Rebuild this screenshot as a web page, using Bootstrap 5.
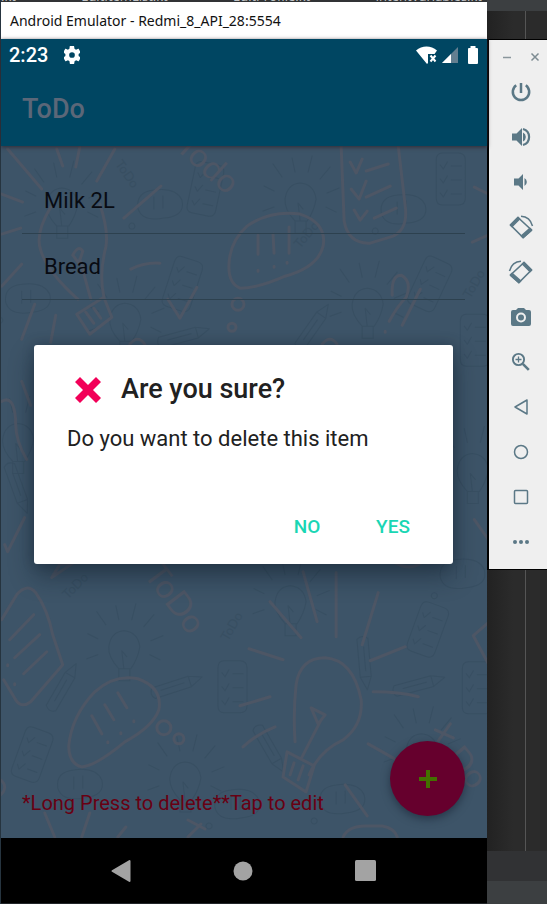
<!DOCTYPE html>
<html lang="en">
<head>
<meta charset="utf-8">
<meta name="viewport" content="width=device-width, initial-scale=1">
<title>Android Emulator</title>
<link href="https://cdn.jsdelivr.net/npm/bootstrap@5.3.0/dist/css/bootstrap.min.css" rel="stylesheet">
<style>
body { background: #2b2b2b; font-family: Roboto, "Liberation Sans", sans-serif; }
button { background: none; border: 0; padding: 0; }
svg { display: block; }
.emulator { border-left: 1px solid #26343f; min-width: 0; }
.editor-tabs { height: 2px; background: #313335; color: #c4c6c8; font: 13px/12px "Open Sans", sans-serif; padding-right: 5px; }
.window-title { background: #fff; color: #111; font: 14px/37px "Noto Sans", "Open Sans", sans-serif; padding-left: 9px; }
.status { height: 32px; color: #fff; font-size: 20px; line-height: 32px; font-weight: 500; padding: 0 7px 0 8px; }
.top-area { background: #004662; box-shadow: 0 1px 4px rgba(50, 35, 45, .9); z-index: 1; }
.app-name { color: #5b6778; font-size: 27px; line-height: 73px; font-weight: 500; padding: 2px 0 0 21px; }
.board { background: #3d5468; padding: 22px 22px 22px 21px; }
.doodles { z-index: 0; inset: 0; width: 100%; height: 100%; }
.todo-list { --bs-list-group-bg: transparent; --bs-list-group-color: #080b12; z-index: 1; }
.board .todo-list .list-group-item { font-size: 22px; line-height: 65px; padding: 0 22px; border-width: 0 0 1px; border-color: #2d414f; }
.hint { color: #680013; font-size: 20px; line-height: 26px; }
.bottom-row { z-index: 1; }
.fab { width: 75px; height: 75px; background: #66002d; box-shadow: 0 3px 8px rgba(20, 30, 45, .55); }
.dialog-layer { inset: 32px 34px 0 33px; z-index: 2; }
.dialog-box { background: #fff; color: #212121; border-radius: 3px; box-shadow: 0 12px 24px rgba(12, 25, 38, .45), 0 0 12px rgba(12, 25, 38, .25); padding: 24px 17px 14px 33px; }
.dialog-title { font-size: 27px; line-height: 40px; font-weight: 500; gap: 17px; padding-left: 5px; }
.dialog-text { font-size: 22px; line-height: 30px; margin: 15px 0 50px; }
.dialog-actions button { color: #1ad6b4; font-size: 19px; line-height: 46px; font-weight: 500; width: 86px; }
.nav-keys { height: 65px; background: #000; padding: 0 82px 0 80px; }
.nav-keys button { width: 80px; }
.side { width: 60px; background: linear-gradient(90deg, #222 0, #2b2b2b 26px); }
.side-top { height: 39px; }
.side-cap { height: 11px; background: #3c3f41; }
.margin-rule { border-left: 1px solid #555; margin-left: 38px; }
.tools { background: #efefef; border: 1px solid #000; border-right: 0; border-left-width: 2px; color: #5b7886; padding-bottom: 5px; }
.tools .tool { height: 45px; width: 63px; color: inherit; }
.win-keys { height: 29px; padding: 5px 0 0 13px; gap: 18px; color: #8a969c; }
.pane-a { height: 30px; background: #313234; }
.pane-b { height: 23px; background: #3c3f41; }
</style>
</head>
<body>
<div class="d-flex min-vh-100 overflow-hidden">
  <main class="emulator flex-grow-1 d-flex flex-column">
    <div class="editor-tabs d-flex align-items-end justify-content-between overflow-hidden" aria-hidden="true"><span>.kt</span><span>EditItemList.kt</span><span>EditProfile.kt</span><span>IntentVariables.kt</span></div>
    <div class="window-title text-nowrap">Android Emulator - Redmi_8_API_28:5554</div>

    <div class="position-relative flex-grow-1 d-flex flex-column">
      <header class="top-area position-relative">
        <div class="status d-flex align-items-center">
          <span>2:23</span>
          <svg class="ms-3" width="16" height="18" viewBox="3 2 18 20" fill="#fff"><path d="M19.4 13a7.500 7.500 0 0 0 0-2l2.100-1.600c.2-.2.3-.4.1-.7l-2-3.400c-.1-.3-.4-.3-.6-.2l-2.500 1a7 7 0 0 0-1.700-1L14.400 2.500c0-.3-.2-.5-.5-.5h-4c-.2 0-.4.2-.5.500L9.100 5.100a7 7 0 0 0-1.700 1l-2.500-1c-.2-.1-.5 0-.6.2l-2 3.400c-.1.200-.1.500.1.700L4.600 11a7.500 7.500 0 0 0 0 2l-2.100 1.600c-.2.200-.3.400-.1.700l2 3.400c.1.200.4.300.6.200l2.500-1a7 7 0 0 0 1.700 1l.3 2.600c.1.300.3.500.5.500h4c.3 0 .5-.2.500-.5l.4-2.600a7 7 0 0 0 1.700-1l2.500 1c.2.100.5 0 .6-.2l2-3.400c.1-.2.100-.5-.1-.7zM12 15.200a3.200 3.200 0 1 1 0-6.400 3.200 3.200 0 0 1 0 6.400z"/></svg>
          <svg class="ms-auto" width="22" height="18" viewBox="0 0 22 18"><path fill="#fff" d="M0 4.500C6-.8 15-.8 21 4.500L18.500 8H12v9l-1 1z"/><path d="M14.500 9.500l5 6m0-6l-5 6" stroke="#fff" stroke-width="2"/></svg>
          <svg class="ms-1" width="16" height="16" viewBox="0 0 16 16"><path d="M16 0v16H0z" fill="#647f90"/><path d="M9 7v9H0z" fill="#fff"/></svg>
          <svg class="ms-2" width="14" height="18" viewBox="0 0 14 18"><path fill="#fff" d="M4.500 0h5v2H11q1 0 1 1v14q0 1-1 1H3q-1 0-1-1V3q0-1 1-1h1.500z"/></svg>
        </div>
        <h1 class="app-name m-0">ToDo</h1>
      </header>

      <section class="board position-relative flex-grow-1 d-flex flex-column justify-content-between">
        <svg class="doodles position-absolute" viewBox="1 147 486 691" preserveAspectRatio="xMidYMid slice" fill="none" stroke-linecap="round" stroke-linejoin="round" aria-hidden="true">
          <defs>
            <g id="lamp"><path d="M-5 22Q-16 10-15 0Q-13-15 0-16Q14-15 16 0Q14 12 7 22zM-5 22v12h11V22M0 22L-2 4 3 10M-26-8l-10-5M-18-22l-9-13M-5-27l-3-14M8-27l4-16M20-20l10-12M27-6l12-5M26 8l10 5M-26 8l-11 4"/></g>
            <g id="note"><path d="M-9-26h16q7 0 7 7v38q0 7-7 7h-16q-6 0-6-7v-38q0-7 6-7zM-11-14l3 4 4-7M0-13h10M-11 0l3 4 4-7M0 1h10M-11 14l3 4 4-7M0 15h10"/></g>
            <g id="pen"><path d="M-26-4h38l13 5-13 6h-38q-5-5 0-11zM12-4v11M-18 1h24"/></g>
            <g id="puff"><path d="M-22 3q-2-16 16-18 22-3 28 10 4 16-18 18-22 4-26-10zM-6-8v12M3-9v12M-28 18a3 3 0 1 0 .1 0"/></g>
          </defs>
          <g stroke="#384f62" stroke-width="1">
            <use href="#lamp" x="300" y="200"/><use href="#note" x="451" y="180"/><use href="#puff" x="403" y="211"/>
            <use href="#note" transform="translate(206 190) rotate(12)"/><use href="#puff" x="160" y="206"/><use href="#lamp" x="62" y="205"/>
            <use href="#lamp" x="367" y="305"/><use href="#note" transform="translate(430 285) rotate(25)"/><use href="#note" x="475" y="341"/>
            <use href="#pen" transform="translate(313 325) rotate(-55)"/><use href="#note" transform="translate(183 285) rotate(18)"/><use href="#lamp" x="125" y="320"/>
            <use href="#pen" transform="translate(185 335) rotate(-15)"/><use href="#puff" x="28" y="300"/><use href="#lamp" x="18" y="440"/><use href="#pen" transform="translate(20 490) rotate(70)"/>
            <use href="#lamp" x="124" y="647"/><use href="#pen" transform="translate(63 685) rotate(-60)"/><use href="#pen" transform="translate(178 684) rotate(-18)"/>
            <use href="#note" x="233" y="687"/><use href="#note" transform="translate(33 755) rotate(20)"/><use href="#lamp" x="185" y="778"/><use href="#puff" x="80" y="785"/>
            <use href="#lamp" x="290" y="602"/><use href="#note" transform="translate(428 630) rotate(20)"/><use href="#note" x="477" y="688"/><use href="#pen" transform="translate(420 683) rotate(-15)"/>
            <use href="#pen" transform="translate(366 665) rotate(85)"/><use href="#lamp" x="421" y="750"/><use href="#puff" x="342" y="800"/><use href="#puff" x="462" y="575"/><use href="#pen" transform="translate(272 750) rotate(60)"/>
            <use href="#lamp" x="472" y="470"/><use href="#puff" x="237" y="805"/>
          </g>
          <g fill="#384f62" font-family="Lato, sans-serif" font-size="13">
            <text transform="translate(300 250) rotate(-50)">ToDo</text><text transform="translate(115 165) rotate(55)">ToDo</text><text transform="translate(68 600) rotate(-45)">ToDo</text><text transform="translate(228 642) rotate(-60)">ToDo</text><text transform="translate(470 300) rotate(-60)">ToDo</text>
          </g>
          <g stroke="#4d5665" stroke-width="3">
            <path d="M51 208Q35 235 41 251Q47 272 78 300M100 205Q109 232 106 248Q99 275 104 297M77 315L104 298 112 318 90 335zM86 313l8 11M94 309l7 10M80 260L91 300M73 256Q79 245 83 252L79 264z"/>
            <path d="M8 150L42 190M57 150l6 17M80 148l-4 20M115 150L97 182M2 195l21 8M2 235l19-6M2 287L22 265M161 187L124 219M131 270Q145 263 160 264M35 305L22 340M56 316L51 343M168 300L180 319 197 288M130 345q8-10 15 0"/>
            <circle cx="238" cy="305" r="6"/><circle cx="232" cy="328" r="4"/>
            <path d="M341 147L344 222Q348 245 370 244L393 237Q408 230 405 207L398 147M350 163l6 11 6-14M366 172l22-7M351 190l8 10 7-18M366 198l24-11M354 211l6 10 7-9M374 219l22-10"/>
            <path d="M229 265Q230 242 247 227Q270 211 300 215Q327 224 323 247Q318 268 285 277Q258 289 240 289Q228 284 229 265zM258 236v19M258 271v1M273 235l1 19M274 267v1M289 228v26M287 263v1"/>
            <path d="M392 296Q391 276 401 276Q412 282 406 298Q397 307 389 322M385 332v1M420 290L402 326M322 345q8-10 15 0M474 188l14 7M472 243l16-7M22 382l9 24M2 402Q14 395 16 420Q15 440 27 460M5 545l3 7 17-34M474 520l14 20M52 578l8-13 14-2z"/>
            <path d="M2 620L17 595Q27 583 36 593Q48 610 53 635L63 665 31 702Q22 709 16 700L4 680M34 615L10 640M40 635L15 658M47 652L24 674M8 665v1M15 684v1"/>
            <path d="M69 746Q72 716 95 692Q115 674 138 679Q163 688 159 710Q153 727 125 742Q96 766 82 767Q69 764 69 746zM92 716l10 18M105 705l9 15M118 693l9 15M108 742v1M121 733v1M134 721v1"/>
            <circle cx="164" cy="728" r="7"/><circle cx="179" cy="739" r="5"/>
            <path d="M295 742Q293 713 296 685Q300 658 325 658Q353 660 361 700Q363 725 343 740Q319 751 309 775M287 752L314 766 306 792 283 777zM294 763l-4 12M303 766l-5 14M302 757L321 720M311 708l8 4 6 3-7 9z"/>
            <path d="M303 572l14 50M336 573v64M270 602l31 36M378 593l-16 52M249 649l34 11M405 647l-35 14M373 692Q400 692 418 697M240 706l30-9M243 747Q257 734 275 727M368 744l30 17M345 785l22 31M343 837Q348 826 365 826H382Q394 828 397 837M488 623l-15 13 15 28M45 813l10 24M90 813l-8 24M126 827l-8 10M188 820l17 9M201 824l-13 13M1 780q8 7 0 15M435 730l18 8M450 724l-12 17M395 563q15 9 28-1"/>
          </g>
          <g fill="#4d5665" font-family="Lato, sans-serif" font-size="33">
            <text transform="translate(174 149) rotate(42)">Todo</text><text transform="translate(143 575) rotate(53)">ToDo</text><text transform="translate(444 758) rotate(50)">Do</text>
          </g>
        </svg>

        <ul class="todo-list list-group list-group-flush position-relative">
          <li class="list-group-item">Milk 2L</li>
          <li class="list-group-item">Bread</li>
        </ul>
        <div class="bottom-row position-relative d-flex justify-content-between align-items-end">
          <p class="hint m-0">*Long Press to delete**Tap to edit</p>
          <button type="button" class="fab rounded-circle flex-shrink-0 d-flex align-items-center justify-content-center" aria-label="Add item">
            <svg width="20" height="20" viewBox="0 0 20 20"><path d="M10 1v18M1 10h18" stroke="#437000" stroke-width="4"/></svg>
          </button>
        </div>
      </section>

      <div class="dialog-layer position-absolute d-flex align-items-center">
        <div class="dialog-box w-100" role="alertdialog" aria-labelledby="ask" aria-describedby="detail">
          <h2 id="ask" class="dialog-title d-flex align-items-center m-0">
            <svg width="32" height="32" viewBox="0 0 32 32"><path d="M8 4l8 8 8-8 5 5-8 8 8 8-5 5-8-8-8 8-5-5 8-8-8-8z" fill="#f20058"/></svg>
            Are you sure?
          </h2>
          <p id="detail" class="dialog-text">Do you want to delete this item</p>
          <div class="dialog-actions d-flex justify-content-end">
            <button type="button">NO</button>
            <button type="button">YES</button>
          </div>
        </div>
      </div>
    </div>

    <nav class="nav-keys d-flex align-items-center justify-content-between" aria-label="System">
      <button type="button" class="d-flex justify-content-center" aria-label="Back"><svg width="20" height="24" viewBox="0 0 20 24"><path d="M1.500 12L18.500 2v20z" fill="#a3a3a3" stroke="#a3a3a3" stroke-width="2" stroke-linejoin="round"/></svg></button>
      <button type="button" class="d-flex justify-content-center" aria-label="Home"><svg width="20" height="20"><circle cx="10" cy="10" r="9.500" fill="#a3a3a3"/></svg></button>
      <button type="button" class="d-flex justify-content-center" aria-label="Overview"><svg width="21" height="21"><rect width="21" height="21" rx="1.500" fill="#a3a3a3"/></svg></button>
    </nav>
    <div class="border-bottom border-dark"></div>
  </main>

  <aside class="side flex-shrink-0 d-flex flex-column">
    <div class="side-top d-flex flex-column"><div class="side-cap"></div><div class="margin-rule flex-grow-1"></div></div>
    <div class="tools overflow-hidden">
      <div class="win-keys d-flex align-items-center">
        <button type="button" aria-label="Minimize"><svg width="10" height="10"><path d="M1 5.500h8" stroke="#8a969c" stroke-width="1.500"/></svg></button>
        <button type="button" aria-label="Close"><svg width="10" height="10"><path d="M1.500 1.500l7 7m0-7l-7 7" stroke="#7d8b92" stroke-width="1.500"/></svg></button>
      </div>
      <button type="button" class="tool d-flex align-items-center justify-content-center" aria-label="Power"><svg width="24" height="24" viewBox="0 0 24 24" fill="none" stroke="currentColor" stroke-width="2.500"><path d="M12 3v10M7.200 5.200a8.200 8.200 0 1 0 9.600 0"/></svg></button>
      <button type="button" class="tool d-flex align-items-center justify-content-center" aria-label="Volume up"><svg width="24" height="24" viewBox="0 0 24 24" fill="currentColor"><path d="M3 8.500v7h4.500L13 21V3L7.500 8.500z"/><path d="M14 7.500a5 5 0 0 1 0 9z"/><path d="M14 4a8.300 8.300 0 0 1 0 16" fill="none" stroke="currentColor" stroke-width="2.200"/></svg></button>
      <button type="button" class="tool d-flex align-items-center justify-content-center" aria-label="Volume down"><svg width="24" height="24" viewBox="0 0 24 24" fill="currentColor"><path d="M5 8.500v7h4.500L14 20V4L9.500 8.500zM15.500 8a4.600 4.600 0 0 1 0 8z"/></svg></button>
      <button type="button" class="tool d-flex align-items-center justify-content-center" aria-label="Rotate left"><svg width="26" height="26" viewBox="0 0 26 26" fill="none" stroke="currentColor" stroke-linejoin="round"><path d="M10 3.500L23.500 16 15 23.500 2.500 11z" stroke-width="1.700"/><path d="M2.500 11L10 3.500l1.500 1.500L4 12.500zM13.500 22L22 14.500 23.500 16 15 23.500z" fill="currentColor" stroke-width="1.700"/><path d="M13 2.200Q22 2.500 24.500 12" stroke-width="1.500"/></svg></button>
      <button type="button" class="tool d-flex align-items-center justify-content-center" aria-label="Rotate right"><svg width="26" height="26" viewBox="0 0 26 26" fill="none" stroke="currentColor" stroke-linejoin="round"><g transform="matrix(-1 0 0 1 26 0)"><path d="M10 3.500L23.500 16 15 23.500 2.500 11z" stroke-width="1.700"/><path d="M2.500 11L10 3.500l1.500 1.500L4 12.500zM13.500 22L22 14.500 23.500 16 15 23.500z" fill="currentColor" stroke-width="1.700"/><path d="M13 2.200Q22 2.500 24.500 12" stroke-width="1.500"/></g></svg></button>
      <button type="button" class="tool d-flex align-items-center justify-content-center" aria-label="Take screenshot"><svg width="24" height="24" viewBox="0 0 24 24"><path fill="currentColor" d="M9 3h6l2 2h3q2 0 2 2v12q0 2-2 2H4q-2 0-2-2V7q0-2 2-2h3z"/><circle cx="12" cy="12.500" r="4" fill="#5b7886" stroke="#efefef" stroke-width="2"/></svg></button>
      <button type="button" class="tool d-flex align-items-center justify-content-center" aria-label="Zoom"><svg width="24" height="24" viewBox="0 0 24 24" fill="none" stroke="currentColor"><circle cx="9.500" cy="9.500" r="5.600" stroke-width="1.900"/><path d="M9.500 6.500v6M6.500 9.500h6" stroke-width="1.300"/><path d="M13.800 13.800l6 6" stroke-width="2.600"/></svg></button>
      <button type="button" class="tool d-flex align-items-center justify-content-center" aria-label="Back"><svg width="24" height="24" viewBox="0 0 24 24" fill="none" stroke="currentColor" stroke-width="1.500" stroke-linejoin="round"><path d="M6 12l12-7v14z"/></svg></button>
      <button type="button" class="tool d-flex align-items-center justify-content-center" aria-label="Home"><svg width="24" height="24" viewBox="0 0 24 24" fill="none" stroke="currentColor" stroke-width="1.500"><circle cx="12" cy="12" r="6.500"/></svg></button>
      <button type="button" class="tool d-flex align-items-center justify-content-center" aria-label="Overview"><svg width="24" height="24" viewBox="0 0 24 24" fill="none" stroke="currentColor" stroke-width="1.500"><rect x="5.500" y="5.500" width="13" height="13" rx="1"/></svg></button>
      <button type="button" class="tool d-flex align-items-center justify-content-center" aria-label="More"><svg width="24" height="24" viewBox="0 0 24 24" fill="currentColor"><circle cx="6" cy="12" r="2"/><circle cx="12" cy="12" r="2"/><circle cx="18" cy="12" r="2"/></svg></button>
    </div>
    <div class="margin-rule flex-grow-1"></div>
    <div class="pane-a"></div>
    <div class="pane-b"></div>
  </aside>
</div>
</body>
</html>
